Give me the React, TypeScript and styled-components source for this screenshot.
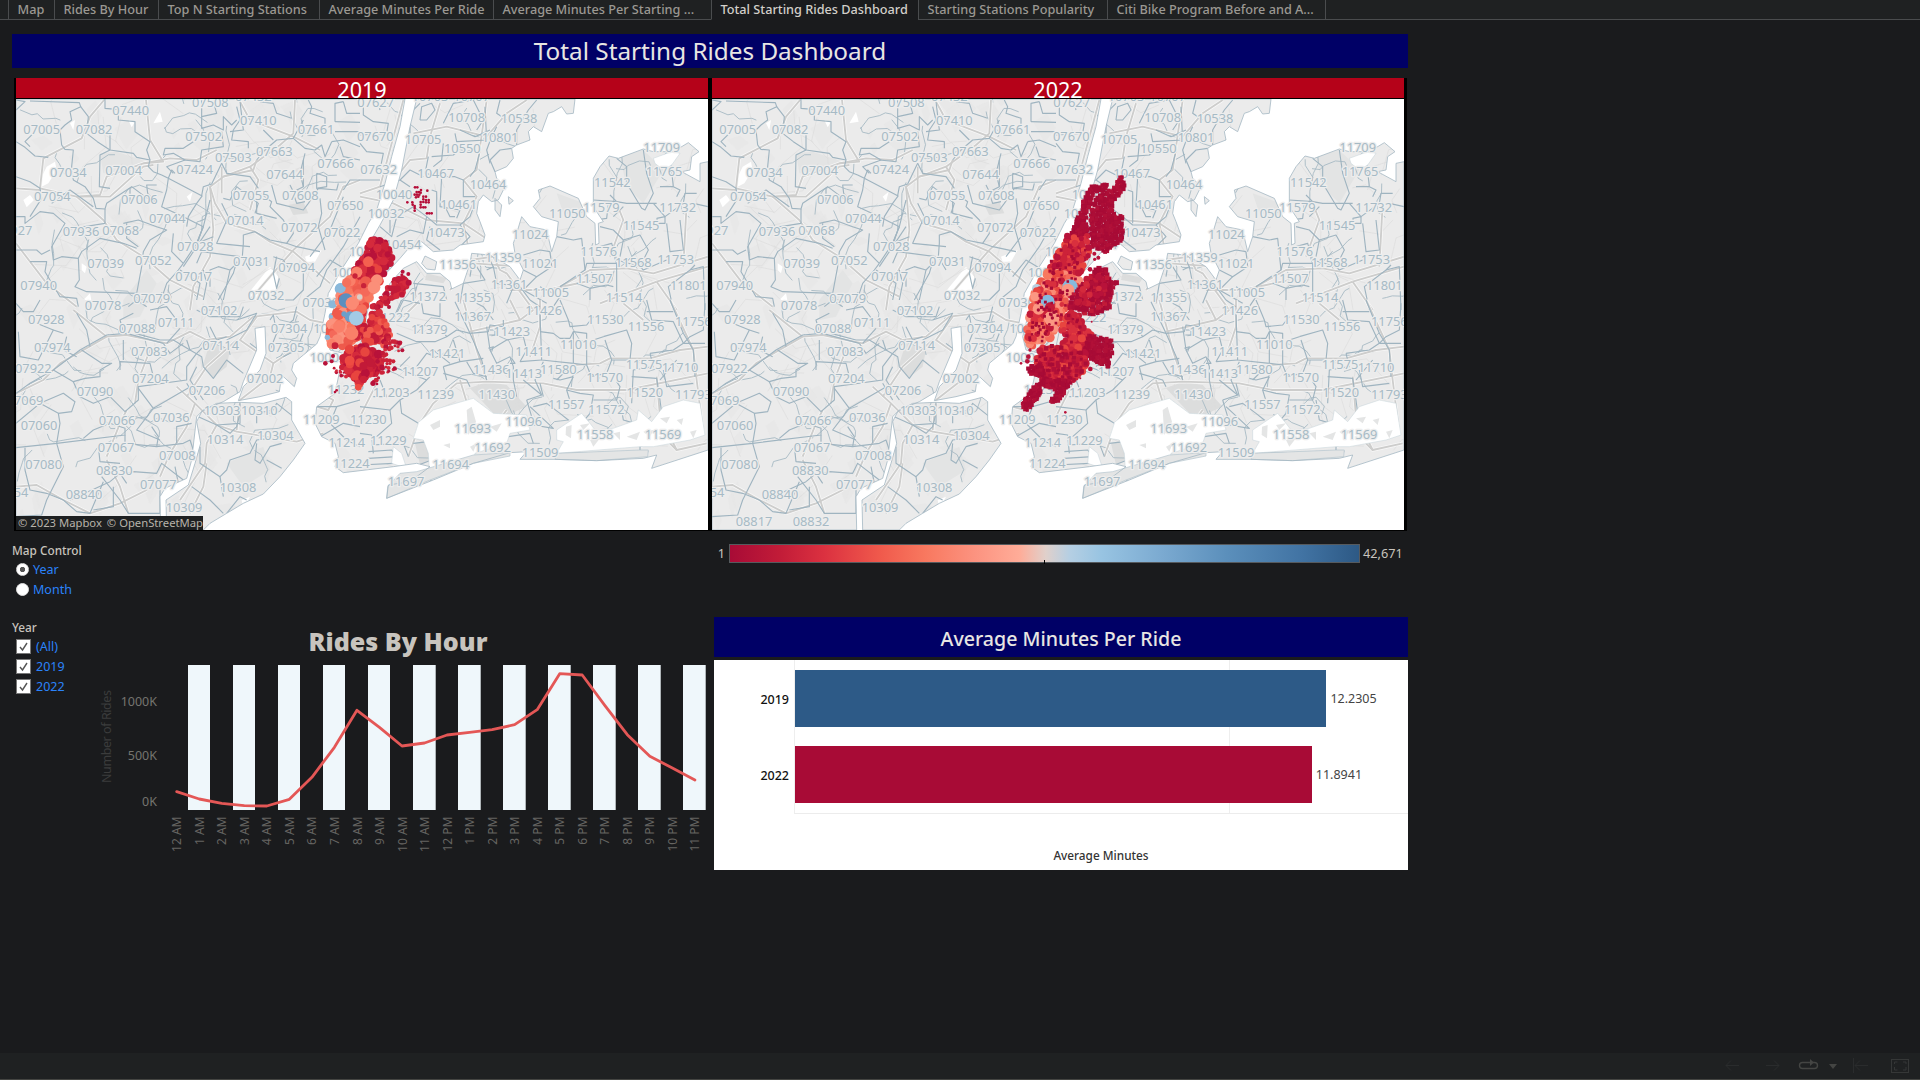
import React from "react";
import styled, { createGlobalStyle } from "styled-components";

const Global = createGlobalStyle`
  * { box-sizing: border-box; }
  body { margin: 0; background: #1a1b1d; font-family: "Noto Sans", "Open Sans", sans-serif; overflow: hidden; }
`;

const Page = styled.div`
  width: 1920px; height: 1080px; display: flex; flex-direction: column; background: #1a1b1d; color: #c8c4be;
`;
const TabBar = styled.nav`
  height: 20px; display: flex; flex: none; background: #1f2122;
  &::before { content: ""; width: 8px; border-bottom: 1px solid #4a4c4e; }
  &::after { content: ""; flex: 1; border-bottom: 1px solid #4a4c4e; border-left: 1px solid #4a4c4e; }
`;
const Tab = styled.div<{ $w: number; $active?: boolean }>`
  width: ${p => p.$w}px; height: 20px; display: flex; align-items: center;
  padding: 0 0 1px 8.5px; white-space: nowrap; font-size: 12.7px; font-weight: 500; line-height: 18px;
  border-left: 1px solid #4a4c4e; border-bottom: 1px solid ${p => (p.$active ? "#1a1b1d" : "#4a4c4e")};
  background: ${p => (p.$active ? "#1a1b1d" : "#1f2122")}; color: ${p => (p.$active ? "#d2cfca" : "#9b9892")};
`;
const Dashboard = styled.main`
  flex: 1; width: 1396px; margin: 14px 0 0 12px;
`;
const Title = styled.h1`
  margin: 0 0 10px; height: 34px; line-height: 34px; text-align: center; background: #000066;
  color: #e8e6e3; font-size: 24.3px; font-weight: 400;
`;
const Maps = styled.section`
  margin-left: 2px; width: 1393px; height: 453px; padding: 0 3px 1px 2px; background: #000;
  display: grid; grid-template-columns: 692px 692px; gap: 4px;
`;
const MapPanel = styled.div` display: flex; flex-direction: column; gap: 1px; position: relative; `;
const MapHead = styled.div`
  height: 20px; line-height: 23px; overflow: hidden; text-align: center; background: #b50219; color: #fff; font-size: 21.6px;
`;
const Attribution = styled.div`
  position: absolute; left: 0; bottom: 0; width: 187px; height: 14px; padding-left: 2px; display: flex; gap: 5px;
  align-items: center; background: #1e2021; color: #b8b3aa; font-size: 11.25px; line-height: 14px; white-space: nowrap;
`;
const Lower = styled.section` display: flex; height: 339px; `;
const Controls = styled.aside` width: 80px; padding-top: 8px; font-size: 12.5px; white-space: nowrap; `;
const ControlTitle = styled.div<{ $gap?: number }>`
  height: 20px; line-height: 22px; color: #c8c4be; margin-top: ${p => p.$gap || 0}px; font-weight: 500; font-size: 11.8px;
`;
const Option = styled.label<{ $gap: number }>`
  height: 20px; display: flex; align-items: center; gap: ${p => p.$gap}px; padding-left: 4px; color: #2b83fa;
`;
const Radio = styled.span<{ $on?: boolean }>`
  width: 13px; height: 13px; border-radius: 50%; border: 1px solid #ddd;
  background: ${p => (p.$on ? "radial-gradient(circle, #555 0 2.3px, #fff 3px)" : "#fff")};
`;
const Check = styled.span`
  width: 15px; height: 15px; background: #fff; border: 1px solid #777; display: flex;
`;
const HourPanel = styled.div` width: 610px; padding-top: 92px; `;
const HourTitle = styled.h2`
  margin: 0; width: 612px; height: 36px; line-height: 36px; text-align: center; color: #c8c4be;
  font-size: 25.1px; font-weight: 900; font-family: "Noto Sans", sans-serif;
`;
const RightCol = styled.div` width: 694px; margin-left: 12px; display: flex; flex-direction: column; `;
const Legend = styled.div`
  height: 44px; padding: 0 5px 0 0; display: flex; align-items: center; font-size: 12.7px; gap: 3px;
`;
const LegendLow = styled.span` width: 12px; padding-right: 1px; text-align: right; `;
const Ramp = styled.div`
  width: 631px; height: 19px; border: 1px solid #565a5e; display: flex; justify-content: center; align-items: flex-end;
  background: linear-gradient(90deg, #a80b36 0%, #c21c38 8%, #db3140 15%, #f05a4c 24%, #f8785f 31%, #fc9380 39%, #ffac98 46%, #e0d0cb 50.2%, #b5cfe3 54%, #98c4e2 59%, #7aa9d0 69%, #5b8fbb 79%, #4173a3 91%, #2d5985 100%);
`;
const Tick = styled.i` width: 1px; height: 4px; margin-bottom: -2px; background: #000; `;
const AvgTitle = styled.h2`
  margin: 42px 0 3px; height: 40px; line-height: 43px; background: #000066; color: #e8e6e3; text-align: center;
  font-size: 19.6px; font-weight: 500;
`;
const AvgCard = styled.div` height: 210px; background: #fff; color: #444; font-size: 12.5px; `;
const Plot = styled.div`
  margin-left: 80px; height: 154px; padding-top: 10px; display: flex; flex-direction: column; gap: 19px;
  border-left: 1px solid #eee; border-bottom: 1px solid #ececec;
  background: linear-gradient(#eee, #eee) 434px 0 / 1px 100% no-repeat;
`;
const BarRow = styled.div` height: 57px; display: flex; align-items: center; margin-left: -46px; `;
const BarName = styled.span` width: 46px; padding: 2px 6px 0 0; text-align: right; color: #111; font-weight: 500; `;
const Bar = styled.div<{ $c: string }>` height: 57px; background: ${p => p.$c}; margin-right: 4px; `;
const AxisName = styled.div` margin: 31px 0 0 80px; text-align: center; line-height: 20px; color: #333; font-weight: 500; font-size: 11.8px; `;
const Footer = styled.footer`
  height: 27px; background: #1f2122; border-bottom: 1px solid #444542; display: flex; justify-content: flex-end;
`;

/* Basemap geometry, three units to a screen pixel, one list per tile */
type Tile = { x: number; y: number; zips: string[]; roads: string[] };
const land = [
  "18,87 1185,87 1170,170 1145,260 1125,340 1100,420 1075,460 1045,520 1000,590 955,670 945,730 930,800 920,822 880,855 850,880 845,900 860,925 853,950 815,915 808,965 750,980 685,992 700,950 750,900 768,850 765,770 735,775 740,840 700,935 690,965 640,995 580,1020 560,1040 545,1170 530,1225 465,1255 450,1280 452,1380 18,1380",
  "575,1025 620,1000 690,997 760,1000 828,982 845,995 845,1050 885,1120 850,1170 810,1220 760,1272 700,1300 650,1330 600,1360 580,1380 470,1380 468,1290 535,1245 555,1180 572,1120 560,1055",
  "1220,87 1695,87 1690,130 1670,132 1655,110 1630,125 1615,130 1595,185 1570,170 1555,185 1560,210 1520,225 1505,235 1510,265 1490,290 1455,305 1460,325 1485,350 1465,390 1445,395 1420,375 1405,395 1400,430 1410,455 1425,495 1420,515 1350,525 1330,540 1270,545 1235,515 1200,530 1170,565 1110,630 1080,690 1050,830 1000,850 960,840 950,800 975,700 1000,650 1060,550 1110,465 1150,390 1175,300 1200,170",
  "1110,700 1140,640 1180,595 1220,575 1250,610 1290,610 1320,635 1325,657 1360,640 1380,580 1385,550 1440,555 1500,590 1530,630 1540,600 1515,550 1510,520 1520,490 1535,440 1560,470 1610,480 1625,545 1640,500 1645,455 1595,440 1570,410 1590,385 1585,360 1620,348 1705,385 1730,440 1755,460 1757,525 1767,520 1765,460 1780,455 1750,410 1750,325 1770,290 1797,258 1825,265 1900,237 1930,245 1990,245 2035,218 2067,245 2045,260 2040,300 2015,305 2070,335 2070,280 2094,275 2094,1140 1925,1195 1940,1155 1900,1165 1760,1172 1635,1168 1530,1168 1550,1145 1500,1148 1390,1180 1270,1230 1130,1285 1135,1245 1200,1235 1260,1190 1220,1180 1150,1190 1050,1202 1000,1208 975,1190 985,1160 975,1120 935,1100 915,1060 920,1010 975,970 1000,850",
  "1235,580 1245,558 1280,575 1275,600 1250,597", "1455,385 1475,405 1470,440 1455,420", "1495,380 1510,392 1497,403",
];
const water = [
  "1222,1060 1270,1020 1320,1005 1390,985 1450,1030 1550,1035 1560,1080 1500,1090 1490,1120 1395,1150 1390,1170 1260,1230 1255,1150 1240,1110 1210,1105 1225,1060",
  "1640,1080 1715,1030 1740,1060 1755,1080 1810,1075 1880,1050 1885,1020 1925,1055 1960,1010 2020,990 2070,1000 2085,1095 2040,1110 1930,1130 1890,1130 1640,1150 1660,1115 1640,1110",
  "1150,1130 1175,1150 1190,1195 1145,1180",
  "1930,265 1985,245 2010,250 1985,285 1960,300 1935,280",
];
const ponds = [
  "95,320 110,290 135,275 140,300 115,340 95,350", "40,390 60,375 72,390 50,412", "430,160 450,125 458,155", "715,670 780,590 805,620 790,690 725,690",
  "530,380 548,365 540,395", "215,580 230,590 225,610 215,600", "220,690 240,670 245,695", "695,1290 720,1280 700,1322", "885,560 935,540 915,575 890,575", "180,160 195,150 190,180", "355,150 375,155 365,172",
];
const tiles: Tile[] = [
  { x: 0, y: 0, zips: [
    "18,215 45,232 75,258 115,262", "60,93 208,98 212,110 180,125 185,150 165,165 150,180 155,225 165,238 190,240 185,290 190,330 225,350 250,385 258,415 285,417 290,400 365,350 405,380 440,400",
    "212,110 235,140 230,190 262,215 300,240 370,250 380,262 420,270 415,290 430,305 455,315 475,325 470,360 455,410 520,440 580,470 560,520 520,580",
    "300,240 270,255 268,350 300,355", "300,185 300,240", "285,87 285,115 320,118", "325,130 325,150 375,155 375,185 420,215 410,240 420,270", "285,417 285,460 160,480",
    "18,440 45,440 45,460 90,425 130,430 165,460 125,530 130,570 155,560 205,565 208,630 195,650 230,665 380,670 395,590 400,545 420,510 470,480 440,470 385,450 340,460",
    "205,565 215,545 270,505 340,520 380,535", "18,540 80,540 95,553 120,540", "60,575 110,575 105,605 150,680 200,685 205,710", "440,345 410,345 413,370 440,400", "475,325 575,377 580,350 605,342 635,280",
    "490,310 470,290 525,270 490,250 460,255 465,235 520,235 550,215", "575,90 575,175 610,165 640,180 640,140 665,165 680,150", "520,270 570,275 575,240 640,230 635,185", "680,110 690,150 670,180 665,210 715,215 715,235",
    "635,280 650,310 720,320 745,355", "577,377 560,400 535,440 530,470", "600,390 580,470 560,520 610,500", "635,400 655,440 620,520 720,530", "640,385 660,390 680,350 745,400 735,430",
    "750,370 785,395 780,410 820,450 830,470", "735,485 700,495 700,520 697,560 720,600", "735,485 780,510 830,520 850,490 845,470", "830,520 860,530 930,545", "850,205 885,235 915,240 935,225 945,260 965,215",
    "895,90 905,110 900,130 945,145 945,180", "975,155 975,100 1000,95", "975,155 1050,157", "975,185 1050,185", "740,270 765,240 800,210 850,205 880,150", "785,345 800,400 880,420 895,400 925,355 980,360 985,340",
    "920,310 950,320 950,350 920,355 920,310", "885,250 870,310 880,350", "930,385 935,430 925,470 945,540", "1000,380 960,480 900,560", "1050,440 1000,530 950,600 930,650 880,690", "520,580 505,600 470,640 450,700",
    "600,650 600,600 625,590 660,600 640,690", "660,600 690,570", "520,580 485,545 490,490", "800,560 790,610 800,655 808,625", "880,610 880,660 850,690 820,690", "560,580 575,545 690,560", "920,620 960,570 1010,600",
    "18,120 45,95 18,90", "125,400 180,360 250,410", "360,355 360,400", "580,690 590,640 580,600", "740,390 740,430 800,445", "850,370 860,400 885,395", "625,690 670,610 680,575", "355,710 380,690 410,710", "1000,95 1010,130 1050,130", "690,95 700,180 660,185", "880,270 880,350 850,365 840,345",
    "18,320 60,335 90,355 95,385 60,440", "70,190 45,215 60,230", "610,95 620,130 575,140", "750,95 790,100 800,130 845,145", "760,180 790,210", "965,215 1000,210 1050,230", "990,230 1000,260 1050,270", "1050,330 1020,330 1000,360", "350,460 350,505 385,530", "475,325 485,300 495,310", "510,600 570,640 560,690", "520,590 600,470", "960,480 1000,470", "840,600 820,570 790,560",
  ], roads: [
    "285,87 240,140 215,205 100,265 90,355 200,380 270,375 290,320 400,280 460,275 420,210 408,90", "18,355 90,360", "200,380 280,450 320,510 400,560 480,630 580,680", "400,280 480,265 560,270 620,240",
    "855,90 850,190 810,225 720,290 640,320 600,350 615,400 650,460 735,485 780,515 850,545 960,640", "640,320 730,300 740,270", "690,95 720,150 850,200 930,240", "18,520 110,640 200,710",
    "1050,330 1000,350 960,440 850,540 780,620 720,690", "600,350 610,480 600,560 550,650 540,720", "635,290 635,370", "720,290 745,330 720,420", "210,380 300,380 400,290 430,285",
  ] },
  { x: 0, y: 690, zips: [
    "18,10 40,35 70,35 90,0", "25,95 30,170 85,180 100,150 130,90 160,100", "18,280 60,250 130,210 210,150 290,105 350,100 460,130", "130,210 190,245 225,235 270,230 270,210 305,190 275,190 215,150", "190,245 210,290 250,310 300,290 345,335 385,300 385,260 530,240 530,200 560,160 600,120",
    "330,210 330,185 420,190 430,230", "18,370 90,310 145,340 150,370 140,430 18,443", "90,310 160,280 195,305 185,335 145,340", "140,430 345,405 345,385 300,370 250,390 220,415", "45,443 45,510 60,570 110,580 160,600",
    "140,430 160,500 110,600 95,645 18,650", "345,405 345,430 440,440 445,410 425,380", "385,265 430,325 550,255", "430,325 380,390 450,420", "440,440 520,430 540,420 550,450", "265,440 270,485 330,490", "275,530 330,600 355,640 450,640",
    "350,520 370,515 440,520 455,490 520,540 540,540", "160,600 200,635 240,640 280,545", "530,120 540,150 575,170 580,200", "560,200 540,240 580,300", "580,200 610,235 650,180 700,220", "540,150 490,120 450,120 375,100", "510,85 470,130",
    "600,80 620,120 650,110", "680,60 740,40 710,90 650,120", "565,350 620,375 690,370 690,310", "620,375 660,400 680,380 690,340", "740,370 740,340 790,330 800,310 850,350", "570,440 570,490 630,530 650,510 660,480 720,460 740,420 780,415", "630,530 640,590",
    "740,430 735,480 750,490 780,440 815,430", "770,480 815,505", "545,560 600,600 640,640", "650,640 690,590 710,600", "780,60 790,45 800,100 780,150", "820,170 860,150 880,100", "930,410 1000,370 1050,380", "920,320 980,320 1050,300", "980,320 960,370 1010,420 1050,440",
    "495,500 505,550 530,555", "450,560 450,640", "300,545 330,520 350,550", "370,40 330,60 340,95", "130,90 80,70", "420,30 470,20 500,60", "560,30 600,50 690,50 700,20", "310,560 310,620 250,630",
    "460,130 480,160 520,130", "340,120 340,180", "170,110 160,150 200,170", "500,430 500,380 545,370", "530,250 560,300", "240,140 230,90 200,40", "800,100 850,60 860,20", "720,130 760,160 750,200", "180,600 300,545",
  ], roads: [
    "18,280 100,240 150,190 290,110 350,105 470,130 540,95 590,120 660,110 730,50 860,35 900,60 950,70", "190,30 290,110", "375,310 385,240 420,150 440,150", "740,50 690,120 790,190 850,150", "790,190 780,230 690,300 680,390",
    "500,260 555,310 620,375 590,430 585,490 510,600", "555,310 530,380 480,460 450,530", "620,375 680,395 860,425 940,400", "18,560 80,555 160,600 240,640 330,610 410,570", "290,480 330,560 355,640", "290,470 330,370 350,330", "680,120 590,200 530,290", "920,320 955,330 970,300 950,290", "590,490 580,560 540,640",
  ] },
  { x: 1050, y: 0, zips: [
    "10,100 10,135 40,155 85,160 80,190 0,195", "0,220 20,245 70,250 60,300", "60,330 0,330", "180,150 185,110 215,100 225,120 200,150 180,150", "250,160 280,100 340,90 370,150 350,180", "285,190 290,215 380,210 375,110",
    "215,260 280,255 300,240 360,245 345,300 330,320", "205,260 195,310 245,320 285,320 310,330 310,380 345,380", "245,320 240,410 300,420 290,445", "250,400 270,440 285,440", "390,280 380,240 395,200 410,170", "300,180 345,200 390,180",
    "470,225 470,180 505,120 530,90", "455,235 420,240 390,270 405,305", "120,330 150,300 190,320", "60,410 110,440 95,500 60,470", "110,440 160,410 200,440 190,490 150,480 110,500", "200,440 230,465 300,465 330,440 345,400", "215,360 230,365 230,460",
    "240,540 200,510 210,470", "300,465 330,500 300,530", "770,265 800,290 800,340 845,415 855,420 880,370 860,310 850,240", "885,280 930,260 940,350 900,350", "880,400 915,440 970,400 975,370 1010,370", "750,375 770,395 700,390",
    "770,395 800,400 890,400", "705,450 740,445 745,400", "720,470 760,480 790,510 840,495 865,540 840,590 770,570 755,520 720,530", "890,445 915,440 915,460 895,460 890,445", "920,460 930,545 970,540 960,450", "590,500 640,510 665,505 675,600 600,650",
    "490,600 530,620 575,590 570,545", "400,590 410,640 480,650 510,690", "530,620 490,660 560,700", "350,590 375,630 310,640 300,700", "160,640 250,650 260,690", "675,600 680,580 770,580 770,700", "690,655 740,645 760,650", "690,690 690,655 650,640",
    "1005,585 990,600 925,650 940,720", "990,600 1030,590 1035,720", "490,555 540,540 570,545", "170,650 160,690", "380,600 400,590 390,570", "760,440 790,410", "790,510 780,560", "940,350 960,360 950,380", "90,490 90,450", "130,370 60,410", "150,350 120,330 60,350", "540,650 600,680 580,710",
    "250,220 245,270 220,290", "180,100 150,130 150,190", "420,90 410,130 440,150", "1000,400 1044,410", "840,590 850,600 920,570", "330,620 335,590", "460,650 440,700", "0,60 50,80 60,120",
  ], roads: [
    "130,90 60,350 0,370", "160,190 260,170 380,200 440,130 500,90", "110,320 150,270 200,265 210,200 240,100", "0,380 100,400 200,450 310,460 400,520 400,560 330,570", "350,300 310,330 350,380 310,460 335,580 270,660", "400,560 420,600 440,610 520,720",
    "600,650 690,600 800,595 880,610 1044,560", "890,635 720,700", "890,635 1044,590", "700,630 560,660 450,660", "980,400 970,590", "340,580 480,590", "890,635 950,720", "770,400 790,450 750,560", "380,90 350,300",
  ] },
  { x: 1050, y: 690, zips: [
    "100,60 130,0 180,10", "185,10 190,40 240,50 240,10", "170,75 240,80 260,110 225,125 170,125 110,100", "260,110 290,90 330,100", "285,5 330,100 365,180 380,240", "330,100 385,95 390,75 430,80 430,60", "380,80 390,150 440,120 490,110 500,150 480,185",
    "450,170 460,200 460,240 470,290", "250,200 300,185 370,175", "250,220 320,240 330,260", "250,200 260,240", "220,150 270,190", "170,200 200,160 225,170", "210,230 170,270 120,300 125,340 175,370", "540,40 545,180 640,190 680,195 690,220",
    "540,95 580,100 600,115 630,115 640,95 680,100 680,195", "600,0 625,60 630,80 680,75 700,50", "730,110 800,90 815,130 810,180 755,180 735,120", "755,180 740,220 690,230", "860,0 875,60 940,65 970,130 1035,130", "860,35 940,35", "870,160 880,200 820,210 815,310",
    "870,160 940,150 970,130", "1035,10 1030,90 990,110 970,130", "930,0 970,100 1000,150 1005,230", "815,230 890,235 900,300 910,380", "550,185 525,240 545,285 500,300", "640,230 620,270 660,280 700,285 690,340 665,370", "640,230 600,240 580,235",
    "700,300 770,300 780,260 770,245", "780,300 790,360 825,370", "520,320 560,310 600,340 625,360", "620,270 635,320", "910,210 920,260 1000,250", "445,410 510,400 520,430", "35,435 130,430 145,470", "0,400 35,405 40,460", "90,330 95,370 50,410", "0,320 90,330 120,300",
    "60,240 80,290 40,290", "320,185 340,220 380,230", "385,145 400,140 395,155", "455,175 465,190 450,190", "510,320 580,385 520,375", "500,300 515,350", "390,90 405,90 405,105 388,105", "25,455 95,450 110,470 25,475", "0,495 100,490", "160,430 205,425 215,480 175,495", "590,460 865,455", "200,520 215,545",
    "320,330 335,320 345,370 330,400 320,330", "620,375 635,380 630,415 615,400 620,375", "840,430 840,470", "950,180 900,240", "690,220 720,235", "480,185 545,180", "540,250 550,290", "125,0 105,45",
    "400,60 370,20 350,10", "540,20 510,0", "700,120 730,110", "640,95 640,190", "280,120 300,185", "390,150 410,190 450,170", "490,240 545,285", "590,240 640,190", "100,200 150,220 200,240", "150,170 120,200",
  ], roads: [
    "145,470 180,370 220,310 290,250 380,245 550,250 650,270 800,270 1044,220", "640,195 720,190 750,175 870,175 960,150 1044,140", "310,0 350,150 380,240", "930,0 1000,150 1010,240 1030,400", "890,230 900,350 950,450 1040,430", "330,95 480,60 520,30", "450,0 480,60",
    "850,60 790,10", "840,440 870,425 920,420 950,450", "130,50 180,0", "300,240 330,340", "540,0 540,80 510,170", "410,370 440,330", "0,350 50,250",
  ] },
];
const shade = ["1380,955 1430,935 1490,945 1550,1010 1480,1040 1455,1035", "590,850 600,815 660,840 650,890 610,922 577,890", "835,405 880,395 895,430 850,435", "1250,610 1310,625 1300,640 1245,630", "1215,1120 1253,1112 1265,1170 1230,1185"];
const softShade = ["270,250 320,245 410,275 400,300 280,310", "340,690 410,600 440,640 390,740 340,750", "1830,260 1900,240 1960,300 1900,400 1850,350", "1640,370 1710,395 1740,440 1660,430", "650,1180 760,1130 780,1200 700,1250"];

const labelText = `95,177,07005|252,177,07082|362,120,07440|601,98,07508|730,80,07432|745,150,07410|918,177,07661|581,200,07502|793,244,07663|670,262,07503|175,308,07034|341,302,07004|554,299,07424|824,313,07644|977,280,07666|127,380,07054|388,389,07006|723,375,07055|871,375,07608|1006,405,07650|472,446,07044|706,450,07014|868,472,07072|996,487,07022|12,480,07927|213,485,07936|332,480,07068|556,528,07028|287,580,07039|430,571,07052|724,575,07031|860,592,07094|551,620,07017|86,647,07940|425,685,07079|768,676,07032|279,706,07078|932,698,07030|627,720,07102|1020,607,10024|1072,543,10027|1097,98,07627|1260,80,10703|1385,80,10707|1370,142,10708|1527,144,10538|1470,201,10801|1239,209,10705|1357,234,10550|1096,198,07670|1106,299,07632|1277,311,10467|1434,342,10464|1152,373,10040|1346,403,10461|1128,431,10032|1309,487,10473|1179,523,10454|1955,231,11709|1962,304,11765|1807,337,11542|1774,413,11579|2003,413,11732|1672,431,11050|1893,465,11545|1561,492,11024|1766,545,11576|1480,563,11359|1590,580,11021|1343,583,11356|1870,577,11568|1997,568,11753|1753,625,11507|1497,643,11361|2035,645,11801|1622,667,11005|1253,680,11372|1388,681,11355|1842,683,11514|1601,722,11426|109,749,07928|381,774,07088|498,757,07111|837,774,07304|127,832,07974|418,843,07083|632,827,07114|828,832,07305|70,896,07922|421,926,07204|765,924,07002|954,861,10004|255,964,07090|591,962,07206|45,991,07069|636,1020,10303|748,1021,10310|87,1066,07060|321,1052,07066|484,1041,07036|796,1096,10304|645,1107,10314|934,1048,11209|1008,957,11232|318,1133,07067|101,1184,07080|502,1155,07008|1010,1117,11214|313,1200,08830|445,1242,07077|1024,1180,11224|684,1251,10308|222,1274,08840|0,1267,08854|522,1311,10309|1388,738,11367|1146,742,11222|1258,778,11379|1786,747,11530|2050,755,11756|1505,785,11423|1908,769,11556|1705,824,11010|1571,844,11411|1311,849,11421|1444,897,11436|1230,905,11207|1541,910,11413|1645,899,11580|1902,884,11575|2010,891,11710|1784,922,11570|1144,968,11203|1277,972,11239|1460,974,11430|1904,967,11520|2050,973,11793|1669,1003,11557|1789,1017,11572|1075,1049,11230|1541,1055,11096|1388,1076,11693|1755,1092,11558|1959,1093,11569|1135,1111,11229|1448,1133,11692|1590,1148,11509|1322,1183,11694|1188,1233,11697|965,776,10014`;
const split = (s: string) => s.split("|").map(t => t.split(","));
const labels = split(labelText);
const southLabels = split("144,1353,08817|315,1353,08832");

type Pt = [number, number];
const parse = (s: string): Pt[] => s.split(" ").map(p => p.split(",").map(Number) as Pt);
const inside = (x: number, y: number, poly: Pt[]) => {
  let hit = false;
  for (let i = 0, j = poly.length - 1; i < poly.length; j = i++) {
    const [xi, yi] = poly[i], [xj, yj] = poly[j];
    if (yi > y !== yj > y && x < ((xj - xi) * (y - yi)) / (yj - yi) + xi) hit = !hit;
  }
  return hit;
};
const rng = (seed: number) => () => ((seed = (seed * 1664525 + 1013904223) % 4294967296) / 4294967296);

type Dot = { x: number; y: number; r: number; c: string; sq?: boolean };
const scatter = (shape: string, step: number, r0: number, r1: number, colors: string[], seed: number, keep = 1, sq = false): Dot[] => {
  const poly = parse(shape), rand = rng(seed), out: Dot[] = [];
  const xs = poly.map(p => p[0]), ys = poly.map(p => p[1]);
  for (let y = Math.min(...ys); y <= Math.max(...ys); y += step)
    for (let x = Math.min(...xs); x <= Math.max(...xs); x += step) {
      const px = x + (rand() - 0.5) * step, py = y + (rand() - 0.5) * step;
      const c = colors[Math.floor(rand() * colors.length)], r = r0 + rand() * (r1 - r0), k = rand();
      if (k < keep && inside(px, py, poly)) out.push({ x: px, y: py, r, c, sq });
    }
  return out.sort((a, b) => ((a.x * 7 + a.y * 13) % 17) - ((b.x * 7 + b.y * 13) % 17));
};
const dots = (list: string, c: string): Dot[] => list.split(" ").map(s => { const [x, y, r] = s.split(",").map(Number); return { x, y, r, c }; });

const DEEP = ["#b8123a", "#c21a38", "#cc2239", "#d42a3c"];
const MID = ["#cc2239", "#d9303e", "#e8453f", "#c21a38"];
const SALMON = ["#f4695a", "#f8785f", "#fa8a74", "#ee5a4c", "#fb937e"];

const rides2019: Dot[] = [
  ...dots("122,357,18 97,403,12 98,440,12 130,440,15 88,500,12 182,330,12 150,395,14", "#8ab8da"),
  ...scatter("215,206 258,216 278,262 262,300 235,335 190,330 165,300 185,262", 10, 8, 13, [...DEEP, "#d9303e"], 5),
  ...scatter("175,290 240,290 245,325 210,370 150,330", 14, 10, 14, MID, 8),
  ...scatter("150,335 230,330 215,370 200,430 180,500 140,530 90,522 88,480 105,430 118,375", 14, 12, 17, SALMON, 11),
  ...scatter("180,410 200,400 195,470 180,512 165,500", 11, 8, 12, MID, 3),
  ...dots("205,275,16 160,335,15", "#f4604f"), ...dots("170,307,17 150,332,17 117,470,18 155,490,20 95,522,15", "#fa7f69"), ...dots("117,435,15", "#f05a4c"), ...dots("231,330,17 222,352,19 155,397,20", "#fb8f79"),
  ...dots("122,355,15 97,403,8 93,440,6 82,502,8", "#8ab8da"), ...dots("150,440,16 132,432,8", "#6a9fcb"),
  ...dots("138,392,22", "#5b8fbf"), ...dots("157,400,20", "#fb8a74"), ...dots("185,418,16 140,338,14", "#f6705c"), ...dots("169,445,22", "#a3cbe6"), ...dots("179,381,8", "#d9d0ca"),
  ...dots("105,527,10 165,318,8 191,347,8", "#c8223a"),
  ...scatter("220,422 245,422 262,470 272,500 255,528 225,520 190,520 202,480", 10, 9, 13, [...MID, "#f05a4c"], 14),
  ...scatter("250,495 308,520 305,545 250,540", 9, 4, 8, DEEP, 19, 0.75),
  ...scatter("150,530 195,530 240,550 245,590 230,610 210,615 178,645 145,620 120,590 125,560", 10, 9, 15, [...MID, ...DEEP], 23),
  ...scatter("235,540 280,565 290,600 210,645 220,610", 10, 4, 8, DEEP, 29, 0.85),
  ...scatter("300,308 327,328 325,350 290,378 240,415 215,415 245,375 270,345", 8, 4, 9, DEEP, 31, 0.85),
  ...scatter("300,315 325,330 318,370 290,380 280,345", 10, 8, 12, ["#c21a38", "#cc2239", "#d42a3c"], 33, 0.8),
  ...scatter("215,395 240,395 262,365 268,385 240,415 215,415", 10, 6, 10, DEEP, 35),
  ...scatter("95,590 125,592 150,640 130,625 98,610", 9, 3, 6, DEEP, 37, 0.8),
  ...dots("308,305,6 325,312,6 326,338,9 76,580,7 95,574,6 99,558,6 105,666,4 110,661,4 284,595,6 307,541,6 297,518,6 219,640,8 231,642,4 267,411,6", "#b8123a"),
  ...dots("175,652,10 149,572,15", "#ee4b42"),
  ...dots("345,52,4 352,52,4 363,60,4 350,66,4 357,66,4 382,62,4 344,74,4 351,74,4 358,74,4 370,80,4 362,68,4 378,80,4 370,88,4 378,90,4 386,90,4 322,97,4 337,97,4 338,104,4 344,108,4 344,114,4 344,122,4 362,96,4 370,96,4 362,104,4 378,97,4 386,97,4 362,112,4 370,112,4 376,112,4 381,130,4 388,130,4 395,130,4 348,82,4 355,80,4", "#b50d38"),
].map(d => ({ ...d, x: d.x + 870, y: d.y + 300 }));

const D22 = ["#a80b36", "#a80b36", "#ac0e37", "#b11038"];
const rides2022: Dot[] = [
  ...scatter("335,108 385,102 372,120 345,125 335,150 318,205 325,260 262,300 245,300 262,270 285,225 300,170", 7, 5, 7, D22, 41, 1, true),
  ...scatter("425,72 437,110 405,150 398,190 430,200 428,270 375,310 335,290 328,250 332,180 350,140 400,110", 7, 4.8, 6.5, D22, 43, 0.98, true),
  ...scatter("262,262 325,255 330,320 300,370 255,390 195,390 225,325", 11, 7, 12, [...MID, "#b8123a"], 47),
  ...dots("175,418,17", "#b9cfe0"), ...dots("135,540,9 228,398,9", "#7db0d6"),
  ...scatter("205,365 285,370 300,390 262,450 235,520 215,570 160,590 135,575 148,500 160,430 180,395", 13, 11, 16, SALMON, 53),
  ...dots("170,416,14", "#b9cfe0"),
  ...scatter("205,360 300,355 285,440 235,520 190,570 135,580 160,440", 16, 7, 12, MID, 57, 0.5),
  ...dots("270,411,23 203,455,21", "#86b9dd"), ...dots("215,505,23 264,420,19 165,440,14 176,476,18", "#fb9782"), ...dots("210,472,15", "#c21a38"),
  ...scatter("345,355 375,352 392,390 418,395 395,420 390,475 350,492 310,495 300,480 260,470 275,440 310,400", 8, 5, 8, [...D22, "#c21a38"], 61, 0.95, true),
  ...scatter("320,385 375,370 375,420 330,460 285,470", 14, 7, 11, DEEP, 67, 0.7),
  ...scatter("262,478 300,490 312,530 340,560 330,610 250,590 245,540", 11, 8, 13, MID, 71),
  ...scatter("325,555 395,568 400,600 385,650 340,635 310,610", 7, 4.8, 7, D22, 73, 1, true),
  ...scatter("185,590 235,585 320,610 330,640 285,690 245,700 200,715 165,650 170,610", 11, 8, 14, [...MID, ...DEEP], 79),
  ...scatter("185,590 235,585 320,610 330,640 285,690 245,700 200,715 145,660 170,610", 13, 4, 7, D22, 83, 0.7, true),
  ...scatter("140,650 185,645 200,680 150,675", 8, 5, 7, D22, 85, 0.9, true),
  ...scatter("245,690 280,695 230,760 210,755 230,725 190,705 175,745 145,785 120,770 150,720 190,680", 7, 4.5, 7, D22, 89, 0.97, true),
  ...scatter("225,300 320,290 300,370 270,450 230,520 190,580 140,580 170,450", 16, 3.5, 5, ["#a80b36"], 97, 0.7, true),
  ...scatter("255,490 310,510 320,560 260,590", 17, 3.5, 5, ["#a80b36"], 101, 0.7, true),
  ...dots("262,258,10 232,322,10 330,358,7 343,311,6 355,323,6 344,328,5 145,620,7 142,634,7 123,640,4 335,515,3 301,685,3 256,787,4 331,657,7 150,600,5", "#b8123a"),
  ...dots("217,504,5 262,422,5 175,480,5 168,526,5 196,551,5 150,570,5 208,523,4 236,660,5 220,370,6", "#a80b36"),
].map(d => ({ ...d, x: d.x + 822, y: d.y + 240 }));

const hills = (() => {
  const r = rng(77);
  return Array.from({ length: 150 }, () => {
    const x = 20 + r() * 1000, y = 90 + r() * 1250, w = 20 + r() * 60, h = 15 + r() * 50;
    return `${x},${y} ${x + w * 0.6},${y - h * 0.4} ${x + w},${y + h * 0.3} ${x + w * 0.5},${y + h}`;
  });
})();
const lanes = (() => {
  const r = rng(19);
  return Array.from({ length: 190 }, () => {
    const x = 20 + r() * 2060, y = 90 + r() * 1100, a = r() * 6.3, l = 40 + r() * 70;
    return `${x},${y} ${x + Math.cos(a) * l},${y + Math.sin(a) * l} ${x + Math.cos(a + 0.5) * l * 1.8},${y + Math.sin(a + 0.5) * l * 1.8}`;
  });
})();
/* Minor ZIP boundaries: short, jagged, mostly square-cornered */
const parcels = (() => {
  const r = rng(404);
  return Array.from({ length: 130 }, () => {
    let x = 30 + r() * 2050, y = 95 + r() * 1050, a = r() * 6.3;
    const pts = [`${x},${y}`];
    for (let i = 0; i < 5; i++) {
      const l = 12 + r() * 32;
      x += Math.cos(a) * l; y += Math.sin(a) * l;
      a += (r() - 0.5) * 2.2;
      pts.push(`${x.toFixed(1)},${y.toFixed(1)}`);
    }
    return pts.join(" ");
  });
})();
const marsh = ["1260,1065 1290,1050 1290,1070 1270,1080", "1370,1020 1385,1010 1398,1055 1375,1095", "1300,1125 1320,1120 1320,1135", "1440,1070 1475,1060 1460,1085", "1380,1130 1400,1120 1390,1145", "1668,1070 1685,1065 1683,1105 1667,1095", "1810,1090 1830,1085 1830,1110", "1850,1100 1890,1085 1880,1110", "1710,1065 1740,1060 1720,1080", "1950,1045 1980,1040 1970,1060", "2000,1050 2020,1045 2015,1065", "2040,1085 2060,1080 2050,1105", "1900,1085 1930,1080 1920,1100", "1980,1090 2010,1080 2000,1110", "1740,1110 1770,1105 1750,1130"];
const barrier = ["1170,1210 1220,1205 1390,1155 1500,1148 1500,1158 1390,1180 1260,1230 1130,1285 1133,1250", "1640,1150 1890,1140 1915,1140 1913,1160 1760,1172 1635,1168"];

function CityMap({ id, rides, names }: { id: string; rides: Dot[]; names: string[][] }) {
  return (
    <svg width="692" height="431" viewBox="18 87 2076 1293" preserveAspectRatio="none" style={{ display: "block" }}>
      <defs><clipPath id={id}>{land.map((p, i) => <polygon key={i} points={p} />)}</clipPath></defs>
      <rect x="0" y="0" width="2100" height="1400" fill="#fff" />
      <g clipPath={`url(#${id})`} fill="none" strokeLinejoin="round">
        <rect x="0" y="0" width="2100" height="1400" fill="#ebebeb" />
        {hills.map((p, i) => <polygon key={i} points={p} fill="#e5e6e6" opacity=".5" />)}
        {softShade.map((p, i) => <polygon key={i} points={p} fill="#e3e4e4" />)}
        {shade.map((p, i) => <polygon key={i} points={p} fill="#dcdddd" />)}
        {ponds.map((p, i) => <polygon key={i} points={p} fill="#fff" />)}
        {lanes.map((p, i) => <polyline key={i} points={p} stroke="#dddddc" strokeWidth="2" />)}
        {parcels.map((p, i) => <polyline key={i} points={p} stroke="#a9bbc5" strokeWidth="2.8" />)}
        {tiles.map((t, i) => (
          <g key={i} transform={`translate(${t.x} ${t.y})`}>
            {t.roads.map((p, k) => <polyline key={k} points={p} stroke="#f8f8f8" strokeWidth="10" />)}
            {t.roads.map((p, k) => <polyline key={k} points={p} stroke="#cdcdcc" strokeWidth="5.5" />)}
            {t.zips.map((p, k) => <polyline key={k} points={p} stroke="#9fb4c0" strokeWidth="3.4" />)}
          </g>
        ))}
        {water.map((p, i) => <polygon key={i} points={p} fill="#fff" stroke="#c5d2d9" strokeWidth="1.5" />)}
      </g>
      <g fill="#e4e5e5">
        {marsh.map((p, i) => <polygon key={i} points={p} />)}
        {barrier.map((p, i) => <polygon key={i} points={p} stroke="#b4c4cd" strokeWidth="2" />)}
      </g>
      <g fill="none" stroke="#a5b8c3" strokeWidth="2.4">{land.map((p, i) => <polygon key={i} points={p} />)}</g>
      <g fontFamily="Noto Sans, sans-serif" fontSize="38.500" textAnchor="middle" fill="#a6bac5" stroke="#ededed" strokeWidth="8" strokeLinejoin="round" style={{ paintOrder: "stroke" }}>
        {names.map(([x, y, t], i) => <text key={i} x={x} y={Number(y) + 13.5}>{t}</text>)}
      </g>
      {rides.map((d, i) => d.sq
        ? <rect key={i} x={d.x - d.r} y={d.y - d.r} width={d.r * 2} height={d.r * 2} fill={d.c} />
        : <circle key={i} cx={d.x} cy={d.y} r={d.r} fill={d.c} />)}
    </svg>
  );
}

const hours = [791.7, 799, 803.3, 805.7, 806, 799.3, 777.3, 747.3, 710.3, 727.3, 746, 743, 735, 732.3, 729.7, 724.7, 709.7, 673.7, 675, 705.3, 734.7, 756.3, 768, 780];
const hourName = (h: number) => `${h % 12 || 12} ${h < 12 ? "AM" : "PM"}`;

function HourChart() {
  return (
    <svg width="616" height="211" viewBox="92 659 616 211" style={{ display: "block", fontFamily: "Noto Sans, sans-serif", fontSize: 12.5 }}>
      {Array.from({ length: 12 }, (_, i) => <rect key={i} x={188 + i * 45} y="665" width={i < 5 ? 22 : 22.7} height="145" fill="#eff7fb" />)}
      {[["1000K", 702], ["500K", 756], ["0K", 802]].map(([t, y]) => <text key={t} x="157" y={Number(y) + 4.3} textAnchor="end" fill="#75746f">{t}</text>)}
      <text transform="translate(110.5 736.5) rotate(-90)" textAnchor="middle" fill="#3b3c3c" textLength="93">Number of Rides</text>
      {hours.map((_, i) => <text key={i} transform={`translate(${181.3 + i * 22.53} 816.5) rotate(-90)`} textAnchor="end" fill="#666562" fontSize="12">{hourName(i)}</text>)}
      <polyline points={hours.map((y, i) => `${176.7 + i * 22.53},${y}`).join(" ")} fill="none" stroke="#e45756" strokeWidth="2.8" strokeLinejoin="round" strokeLinecap="round" />
    </svg>
  );
}

const tabs: [string, number][] = [["Map", 46], ["Rides By Hour", 104], ["Top N Starting Stations", 161], ["Average Minutes Per Ride", 174], ["Average Minutes Per Starting ...", 218], ["Total Starting Rides Dashboard", 207], ["Starting Stations Popularity", 189], ["Citi Bike Program Before and A...", 218]];

export default function App() {
  return (
    <Page>
      <Global />
      <TabBar>{tabs.map(([t, w], i) => <Tab key={t} $w={w} $active={i === 5}>{t}</Tab>)}</TabBar>
      <Dashboard>
        <Title>Total Starting Rides Dashboard</Title>
        <Maps>
          <MapPanel>
            <MapHead>2019</MapHead>
            <CityMap id="land19" rides={rides2019} names={labels} />
            <Attribution><span>© 2023 Mapbox</span><span>© OpenStreetMap</span></Attribution>
          </MapPanel>
          <MapPanel>
            <MapHead>2022</MapHead>
            <CityMap id="land22" rides={rides2022} names={[...labels, ...southLabels]} />
          </MapPanel>
        </Maps>
        <Lower>
          <Controls>
            <ControlTitle>Map Control</ControlTitle>
            <Option $gap={4}><Radio $on />Year</Option>
            <Option $gap={4}><Radio />Month</Option>
            <ControlTitle $gap={17}>Year</ControlTitle>
            {["(All)", "2019", "2022"].map(t => (
              <Option key={t} $gap={5}>
                <Check><svg width="13" height="13" viewBox="0 0 13 13"><path d="M3 7l2.5 3L10 3" fill="none" stroke="#555" strokeWidth="1.4" /></svg></Check>{t}
              </Option>
            ))}
          </Controls>
          <HourPanel><HourTitle>Rides By Hour</HourTitle><HourChart /></HourPanel>
          <RightCol>
            <Legend><LegendLow>1</LegendLow><Ramp><Tick /></Ramp><span>42,671</span></Legend>
            <AvgTitle>Average Minutes Per Ride</AvgTitle>
            <AvgCard>
              <Plot>
                {([["2019", 12.2305, "#2d5a87"], ["2022", 11.8941, "#a80b36"]] as const).map(([n, v, c]) => (
                  <BarRow key={n}><BarName>{n}</BarName><Bar $c={c} style={{ width: v * 43.45 }} />{v}</BarRow>
                ))}
              </Plot>
              <AxisName>Average Minutes</AxisName>
            </AvgCard>
          </RightCol>
        </Lower>
      </Dashboard>
      <Footer>
        <svg width="220" height="26" viewBox="1700 1053 220 26" fill="none" stroke="#2a2c2d" strokeWidth="1">
          <path d="M1739 1065.5h-13m5-5l-5 5 5 5M1766 1065.5h13m-5-5l5 5-5 5M1853.5 1058v15M1868 1065.5h-13m5-5l-5 5 5 5" />
          <path d="M1813 1062.5h1.5a3 3 0 0 1 0 6h-12a3 3 0 0 1 0-6h8" stroke="#444543" strokeWidth="1.4" />
          <path d="M1810 1059l4 3.5-4 3.5zM1829 1064h8l-4 5z" fill="#444543" stroke="none" />
          <rect x="1891.5" y="1059.500" width="17" height="13" stroke="#353737" />
          <path d="M1894.500 1064v-2h3M1903 1062h3v2M1894.500 1067v3h3M1903 1070h3v-3" stroke="#353737" />
        </svg>
      </Footer>
    </Page>
  );
}
